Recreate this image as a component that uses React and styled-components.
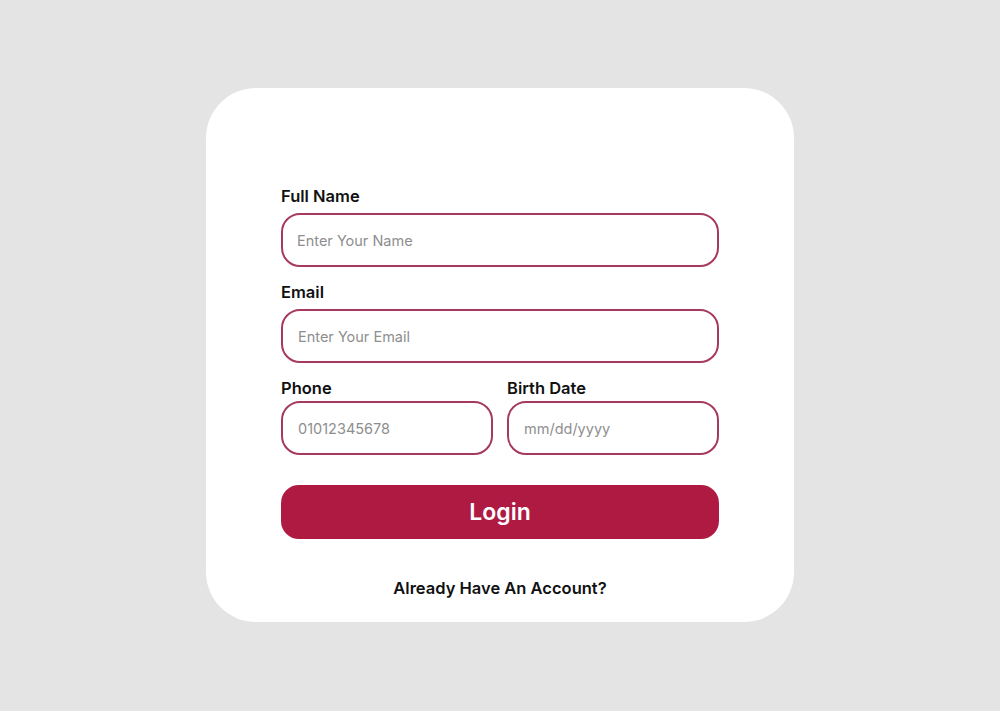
import React from "react";
import styled, { createGlobalStyle } from "styled-components";

const Global = createGlobalStyle`
  html, body { margin: 0; padding: 0; background: #e4e4e4; }
  body { font-family: Inter, "Noto Sans", sans-serif; }
  * { box-sizing: border-box; }
`;

const Page = styled.div`
  width: 1000px;
  height: 711px;
  display: flex;
  align-items: flex-start;
  justify-content: center;
  padding-top: 88px;
`;

const Card = styled.form`
  width: 588px;
  height: 534px;
  background: #ffffff;
  border-radius: 50px;
  padding: 98px 75px 0;
  display: flex;
  flex-direction: column;
`;

const Field = styled.label`
  display: flex;
  flex-direction: column;
  gap: ${(p) => p.$gap}px;
  margin-bottom: ${(p) => p.$mb || 0}px;
`;

const HalfField = styled(Field)`
  flex: 1;
  min-width: 0;
`;

const Label = styled.span`
  font-size: 16.5px;
  line-height: 20px;
  font-weight: 600;
  color: #111111;
`;

const Input = styled.input`
  height: 54px;
  width: 100%;
  border: 2px solid #a63a5e;
  border-radius: 19px;
  padding: 0 ${(p) => p.$pl || 14}px;
  font-family: Inter, "Noto Sans", sans-serif;
  font-size: 14.5px;
  color: #333;
  background: #fff;
  outline: none;
  &::placeholder { color: #8e8e8e; }
`;

const Row = styled.div`
  display: flex;
  gap: 14px;
`;

const Button = styled.button`
  margin-top: 30px;
  height: 54px;
  width: 100%;
  border: none;
  border-radius: 18px;
  background: #ae1a42;
  color: #ffffff;
  font-family: Inter, "Noto Sans", sans-serif;
  font-size: 23px;
  font-weight: 600;
  cursor: pointer;
`;

const Footer = styled.p`
  margin: 39px 0 0;
  text-align: center;
  font-size: 16.5px;
  line-height: 20px;
  font-weight: 600;
  color: #111111;
`;

export default function App() {
  return (
    <>
      <Global />
      <Page>
        <Card onSubmit={(e) => e.preventDefault()}>
          <Field $gap={7} $mb={15}>
            <Label>Full Name</Label>
            <Input placeholder="Enter Your Name" />
          </Field>
          <Field $gap={7} $mb={15}>
            <Label>Email</Label>
            <Input placeholder="Enter Your Email" $pl={15} />
          </Field>
          <Row>
            <HalfField $gap={3}>
              <Label>Phone</Label>
              <Input placeholder="01012345678" $pl={15} />
            </HalfField>
            <HalfField $gap={3}>
              <Label>Birth Date</Label>
              <Input placeholder="mm/dd/yyyy" $pl={15} />
            </HalfField>
          </Row>
          <Button type="submit">Login</Button>
          <Footer>Already Have An Account?</Footer>
        </Card>
      </Page>
    </>
  );
}
